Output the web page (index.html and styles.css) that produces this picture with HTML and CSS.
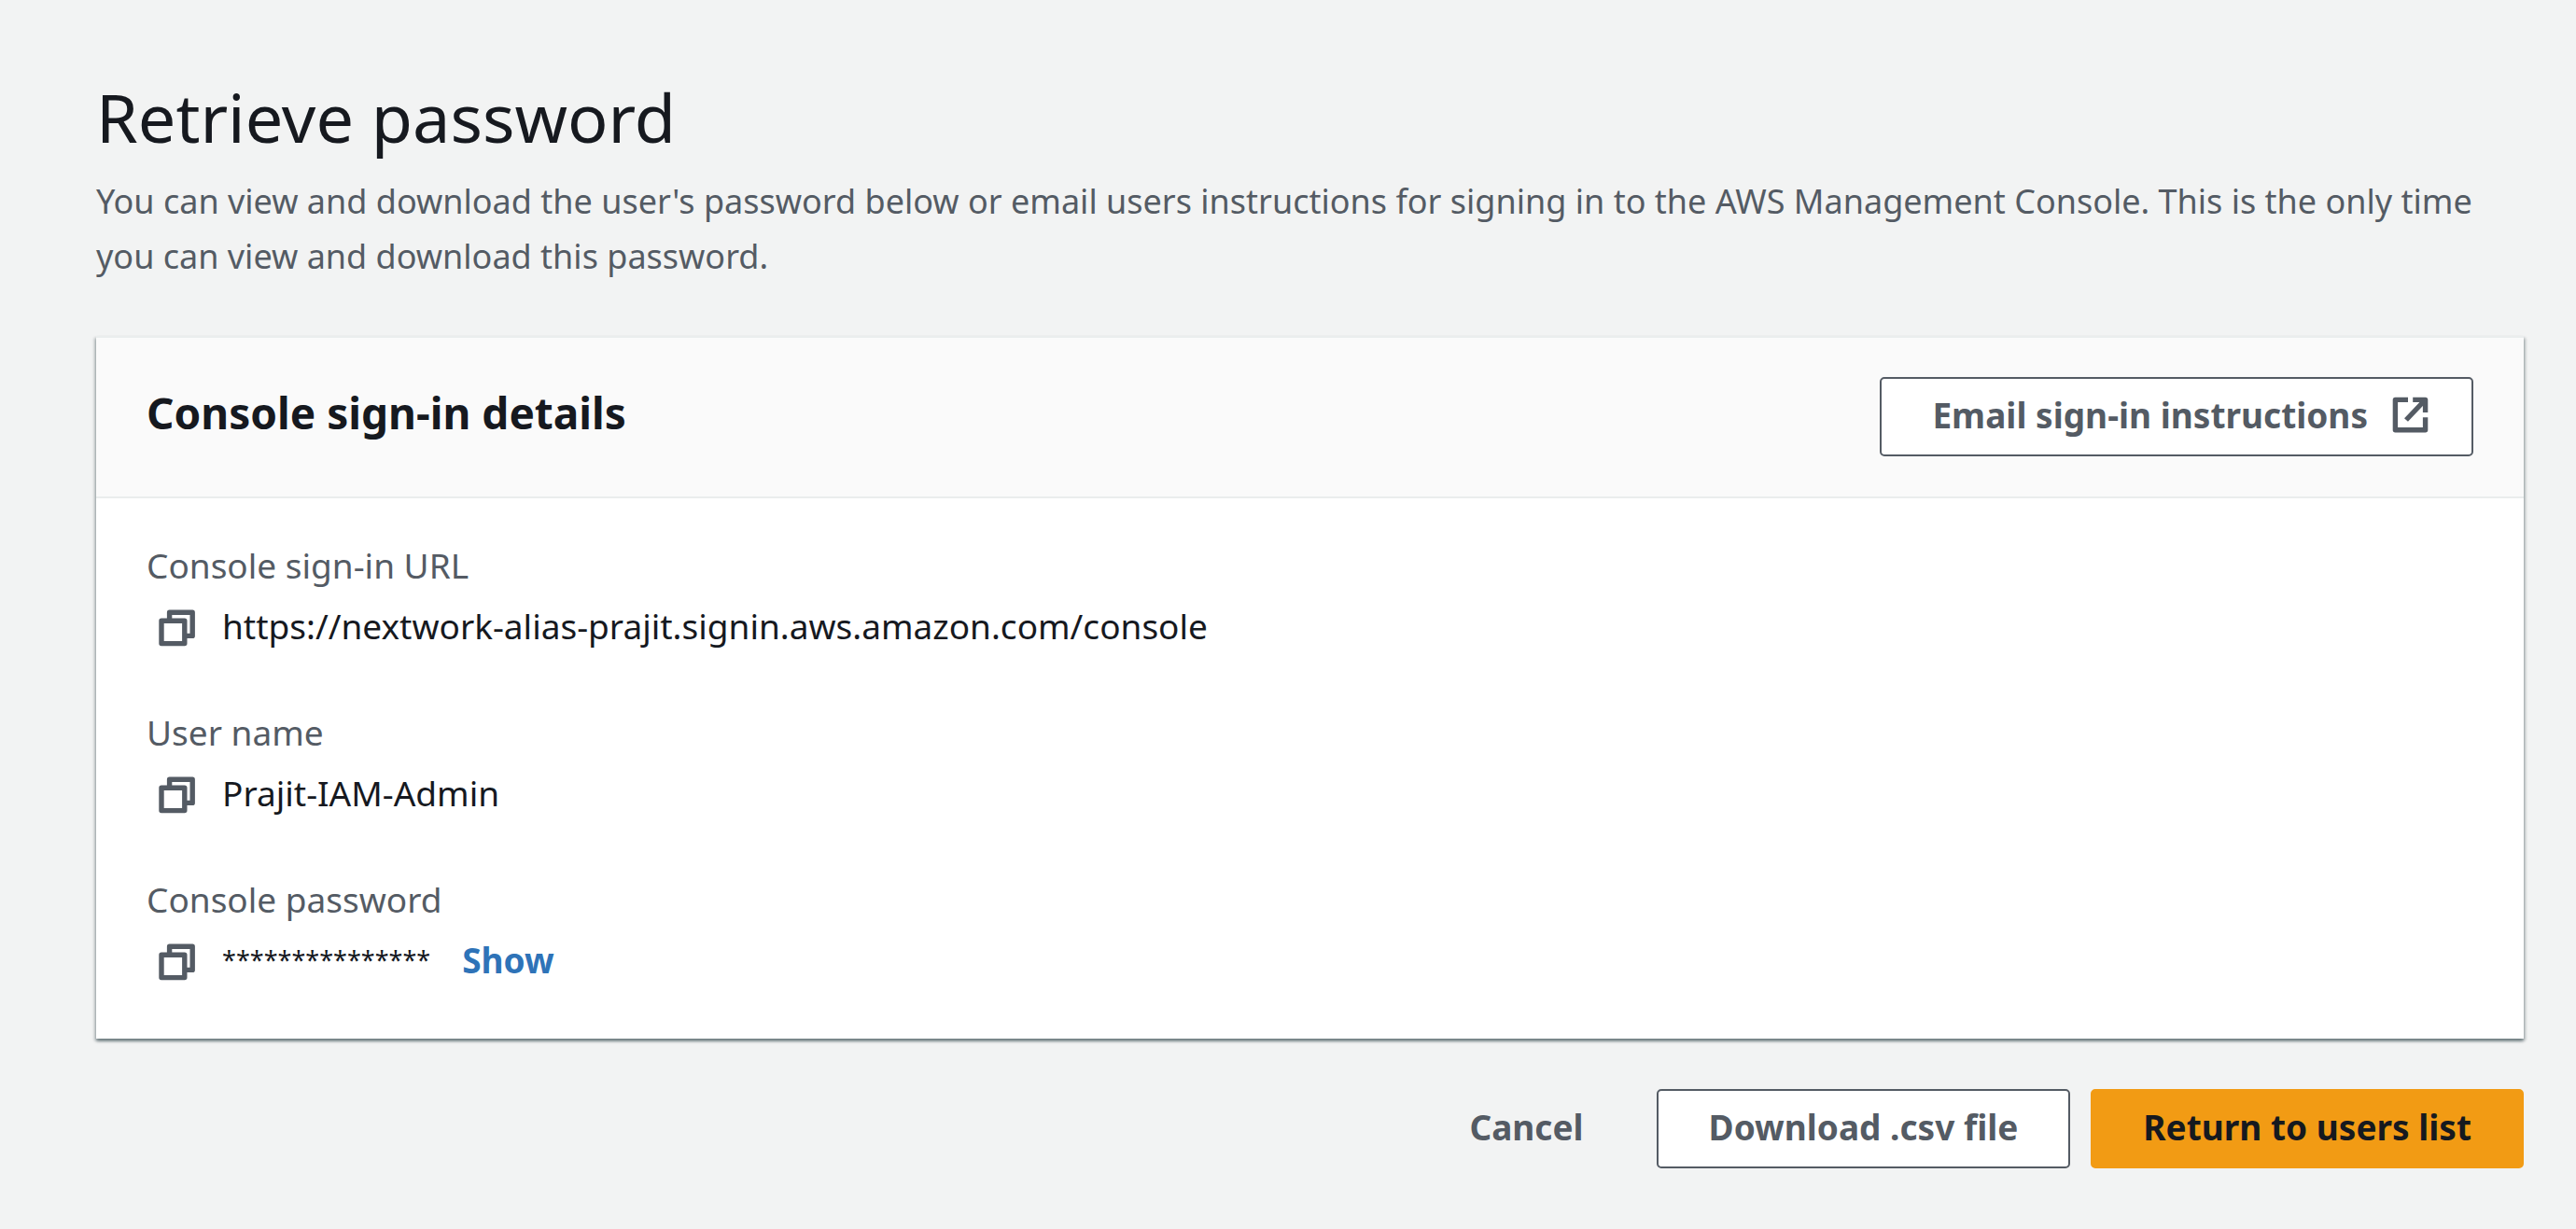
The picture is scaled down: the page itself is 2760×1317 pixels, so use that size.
FILE: index.html
```html
<!DOCTYPE html>
<html lang="en">
<head>
  <meta charset="utf-8">
  <meta name="viewport" content="width=device-width, initial-scale=1">
  <title>Retrieve password</title>
  <link rel="stylesheet" href="styles.css">
</head>
<body>
  <svg class="sprite" aria-hidden="true">
    <symbol id="icon-copy" viewBox="0 0 40 40">
      <g fill="none" stroke="currentColor" stroke-width="5.4" stroke-linejoin="round">
        <path d="M3 12.2h24.8v24.4H3z"/>
        <path d="M11.6 10V3.2h24.6v25.2h-7"/>
      </g>
    </symbol>
    <symbol id="icon-external" viewBox="0 0 40 40">
      <g fill="none" stroke="currentColor" stroke-width="5.4" stroke-linejoin="round">
        <path d="M17 3.4H3.4v32.4h32.2V22.2"/>
        <path d="M22.2 3.4h13.4V17M15 25 34 5"/>
      </g>
      <path fill="currentColor" d="M26 3h12v12z"/>
    </symbol>
  </svg>

  <main class="page">
    <header class="page-header">
      <h1 class="page-title">Retrieve password</h1>
      <p class="page-description">You can view and download the user's password below or email users instructions for signing in to the AWS Management Console. This is the only time you can view and download this password.</p>
    </header>

    <section class="card" aria-labelledby="details-title">
      <div class="card-header">
        <h2 class="card-title" id="details-title">Console sign-in details</h2>
        <button class="button button-icon" type="button">Email sign-in instructions
          <svg class="icon" aria-hidden="true"><use href="#icon-external"/></svg>
        </button>
      </div>
      <dl class="details">
        <div class="detail">
          <dt class="detail-label">Console sign-in URL</dt>
          <dd class="detail-value">
            <button class="copy" type="button" aria-label="Copy console sign-in URL"><svg class="icon" aria-hidden="true"><use href="#icon-copy"/></svg></button>
            <span>https://nextwork-alias-prajit.signin.aws.amazon.com/console</span>
          </dd>
        </div>
        <div class="detail">
          <dt class="detail-label">User name</dt>
          <dd class="detail-value">
            <button class="copy" type="button" aria-label="Copy user name"><svg class="icon" aria-hidden="true"><use href="#icon-copy"/></svg></button>
            <span>Prajit-IAM-Admin</span>
          </dd>
        </div>
        <div class="detail">
          <dt class="detail-label">Console password</dt>
          <dd class="detail-value">
            <button class="copy" type="button" aria-label="Copy console password"><svg class="icon" aria-hidden="true"><use href="#icon-copy"/></svg></button>
            <span class="masked">***************</span>
            <button class="show" type="button">Show</button>
          </dd>
        </div>
      </dl>
    </section>

    <footer class="actions">
      <button class="button button-plain" type="button">Cancel</button>
      <button class="button" type="button">Download .csv file</button>
      <button class="button button-primary" type="button">Return to users list</button>
    </footer>
  </main>
</body>
</html>
```
FILE: styles.css
```css
:root {
  --text: #16191f;
  --muted: #545b64;
  --page: #f2f3f3;
  --line: #eaeded;
  --link: #2e73b8;
  --accent: #f29b14;
}

* {
  box-sizing: border-box;
}

body {
  margin: 0;
  background: var(--page);
  color: var(--text);
  font: 400 37px/59px "Noto Sans", "Open Sans", sans-serif;
}

h1, h2, p, dl, dd {
  margin: 0;
}

button {
  margin: 0;
  border: 0;
  padding: 0;
  background: none;
  color: inherit;
  font: inherit;
  cursor: pointer;
}

.sprite {
  display: none;
}

.icon {
  display: block;
  flex: none;
  width: 40px;
  height: 40px;
}

.page {
  padding: 77px 56px 65px 103px;
}

.page-header {
  display: grid;
  gap: 13px;
  margin-bottom: 56px;
}

.page-title {
  font-size: 72px;
  font-weight: 400;
  line-height: 96px;
}

.page-description {
  color: var(--muted);
  font-size: 36px;
}

.card {
  border-top: 2px solid var(--line);
  background: #fff;
  box-shadow: 0 3px 3px rgba(0, 28, 36, .35), 2px 2px 3px rgba(0, 28, 36, .2), -2px 2px 3px rgba(0, 28, 36, .2);
}

.card-header {
  display: flex;
  align-items: flex-start;
  justify-content: space-between;
  gap: 54px;
  padding: 42px 54px 43px;
  border-bottom: 2px solid var(--line);
  background: #fafafa;
}

.card-title {
  padding-top: 9px;
  font-size: 46px;
  font-weight: 700;
}

.button {
  padding: 9px 54px 13px;
  border: 2px solid var(--muted);
  border-radius: 5px;
  background: #fff;
  color: var(--muted);
  font-weight: 700;
}

.button-icon {
  display: flex;
  align-items: center;
  gap: 26px;
  padding-right: 45px;
}

.button-plain {
  border-color: transparent;
  background: transparent;
}

.button-primary {
  border-color: var(--accent);
  background: var(--accent);
  color: var(--text);
}

.details {
  display: grid;
  gap: 55px;
  padding: 42px 54px 55px;
}

.detail {
  display: grid;
  gap: 6px;
}

.detail-label {
  color: var(--muted);
}

.detail-value {
  display: flex;
  align-items: center;
}

.copy {
  padding: 4px 28px 0 13px;
  color: var(--muted);
}

.masked {
  font-size: 27px;
}

.show {
  margin-left: 34px;
  color: var(--link);
  font-weight: 700;
}

.actions {
  display: flex;
  justify-content: flex-end;
  gap: 22px;
  margin-top: 54px;
}
```
